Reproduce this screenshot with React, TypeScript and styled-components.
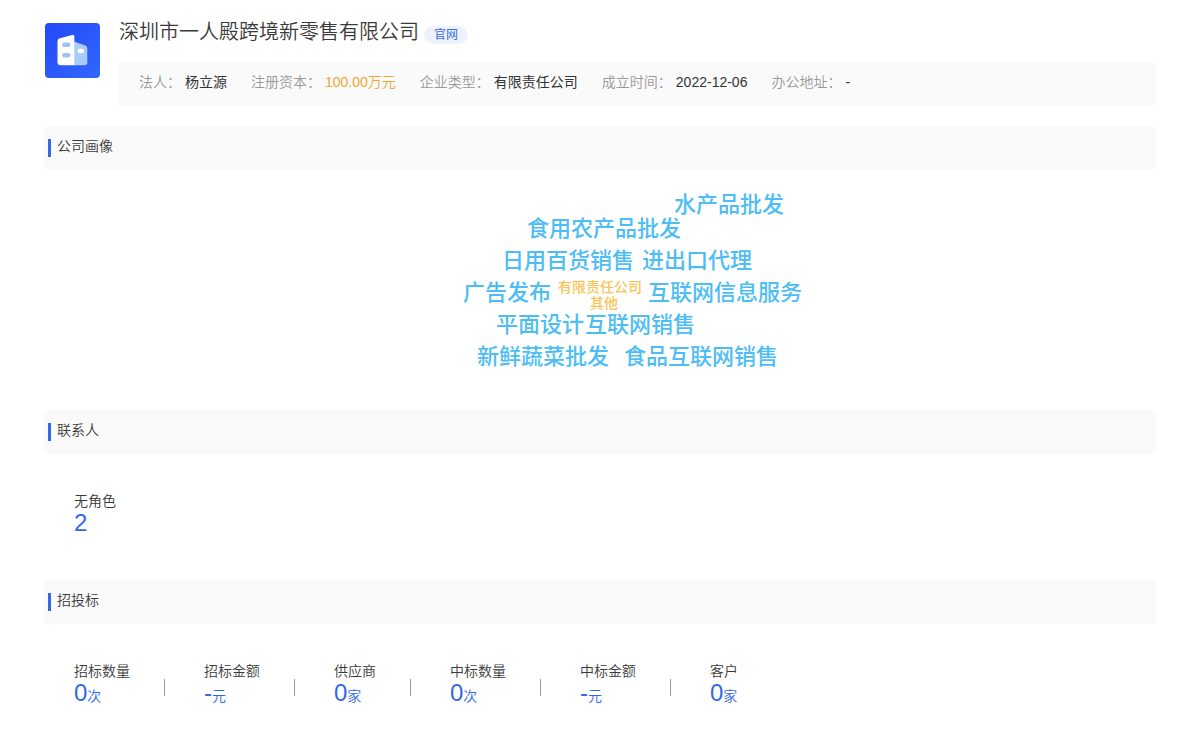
import React from "react";
import styled, { createGlobalStyle } from "styled-components";

const GlobalStyle = createGlobalStyle`
  body {
    margin: 0;
    background: #fff;
    color: #3a3a3a;
    font-family: "Liberation Sans", "Noto Sans CJK SC", sans-serif;
    font-size: 14px;
    font-weight: 350;
    line-height: 20px;
  }
`;

const Page = styled.main`
  padding: 18px 44px 0;
`;

const Header = styled.header`
  display: flex;
  gap: 18px;
  margin-bottom: 20px;
`;

const Logo = styled.svg`
  flex: none;
  width: 57px;
  height: 57px;
  margin-top: 4px;
`;

const Summary = styled.div`
  flex: 1;
  min-width: 0;
`;

const TitleRow = styled.div`
  display: flex;
  align-items: flex-end;
  gap: 5px;
  height: 26px;
  margin-bottom: 18px;
`;

const CompanyName = styled.h1`
  margin: 0;
  font-size: 20px;
  line-height: 24px;
  font-weight: 350;
`;

const SiteLink = styled.a`
  padding: 0 10px;
  border-radius: 9px;
  background: #edf2fd;
  color: #3b6cea;
  font-size: 12px;
  line-height: 18px;
  font-weight: 400;
  text-decoration: none;
`;

const Facts = styled.dl`
  display: flex;
  flex-wrap: wrap;
  gap: 4px 24px;
  margin: 0;
  padding: 10px 20px 14px;
  background: #fafafa;
`;

const Fact = styled.div`
  display: flex;
  gap: 4px;
`;

const FactLabel = styled.dt`
  color: #999;
`;

const FactValue = styled.dd<{ $accent?: boolean }>`
  margin: 0;
  color: ${(p) => (p.$accent ? "#efa62e" : "#333")};
  font-weight: ${(p) => (p.$accent ? 350 : 400)};
`;

const SectionHead = styled.div`
  display: flex;
  align-items: center;
  gap: 6px;
  height: 44px;
  padding-left: 4px;
  background: #fafafa;

  &::before {
    content: "";
    width: 3px;
    height: 18px;
    background: #3467e6;
  }
`;

const SectionTitle = styled.h2`
  margin: 0;
  padding-bottom: 4px;
  font-size: 14px;
  line-height: 20px;
  font-weight: 350;
`;

const CloudArea = styled.div`
  display: flex;
  justify-content: center;
  height: 240px;
`;

const Cloud = styled.svg`
  width: 440px;
  height: 240px;
`;

const Word = styled.text<{ $minor?: boolean }>`
  font-size: ${(p) => (p.$minor ? 14 : 22)}px;
  font-weight: 500;
  fill: ${(p) => (p.$minor ? "#f8c555" : "#4dbdf5")};
`;

const Stats = styled.dl`
  display: flex;
  flex-wrap: wrap;
  margin: 0;
  padding: 37px 30px;
`;

const Stat = styled.div`
  display: flex;
  flex-direction: column;
  height: 52px;
`;

const Divider = styled.div`
  width: 1px;
  height: 17px;
  margin: 18px 39px 0 34px;
  background: #999;
`;

const StatLabel = styled.dt`
  line-height: 20px;
`;

const StatValue = styled.dd`
  margin: 0;
  color: #3467e6;
  font-size: 24px;
  line-height: 24px;
`;

const Unit = styled.span`
  font-size: 14px;
`;

const facts = [
  { label: "法人", value: "杨立源" },
  { label: "注册资本", value: "100.00万元", accent: true },
  { label: "企业类型", value: "有限责任公司" },
  { label: "成立时间", value: "2022-12-06" },
  { label: "办公地址", value: "-" },
];

const words = [
  { text: "水产品批发", x: 294, y: 42 },
  { text: "食用农产品批发", x: 147, y: 66 },
  { text: "日用百货销售", x: 122, y: 98 },
  { text: "进出口代理", x: 262, y: 98 },
  { text: "广告发布", x: 83, y: 130 },
  { text: "有限责任公司", x: 178, y: 122, minor: true },
  { text: "其他", x: 210, y: 138, minor: true },
  { text: "互联网信息服务", x: 268, y: 130 },
  { text: "平面设计", x: 116, y: 162 },
  { text: "互联网销售", x: 205, y: 162 },
  { text: "新鲜蔬菜批发", x: 97, y: 194 },
  { text: "食品互联网销售", x: 244, y: 194 },
];

type StatItem = { label: string; value: string; unit?: string };

const contacts: StatItem[] = [{ label: "无角色", value: "2" }];

const bids: StatItem[] = [
  { label: "招标数量", value: "0", unit: "次" },
  { label: "招标金额", value: "-", unit: "元" },
  { label: "供应商", value: "0", unit: "家" },
  { label: "中标数量", value: "0", unit: "次" },
  { label: "中标金额", value: "-", unit: "元" },
  { label: "客户", value: "0", unit: "家" },
];

function StatList({ items }: { items: StatItem[] }) {
  return (
    <Stats>
      {items.map((item, i) => (
        <React.Fragment key={item.label}>
          {i > 0 && <Divider />}
          <Stat>
            <StatLabel>{item.label}</StatLabel>
            <StatValue>
              {item.value}
              {item.unit && <Unit>{item.unit}</Unit>}
            </StatValue>
          </Stat>
        </React.Fragment>
      ))}
    </Stats>
  );
}

function CompanyLogo() {
  return (
    <Logo viewBox="0 0 57 57" aria-hidden="true">
      <defs>
        <linearGradient id="logo-bg" x1="0" y1="0" x2="1" y2="1">
          <stop offset="0" stopColor="#2448f8" />
          <stop offset="1" stopColor="#3268fb" />
        </linearGradient>
      </defs>
      <rect x="1" y="1" width="55" height="55" rx="4" fill="url(#logo-bg)" />
      <path d="M30 19.5 41.500 23.500Q43.300 24.200 43.300 26V40.500Q43.300 43.200 40.500 43.200H30Z" fill="#a9cbfa" />
      <path d="M15.800 16.200 28.500 13.100Q30.300 12.700 30.300 14.500V43.200H16.500Q13.500 43.200 13.500 40.200V19Q13.500 16.800 15.800 16.200Z" fill="#fff" />
      <rect x="18" y="20.500" width="8.500" height="4.600" rx="2.300" fill="#9fc2f5" />
      <rect x="18" y="31" width="8.500" height="4.600" rx="2.300" fill="#9fc2f5" />
      <rect x="33.500" y="26.700" width="6.500" height="4.600" rx="2.300" fill="#fff" />
    </Logo>
  );
}

export default function App() {
  return (
    <>
      <GlobalStyle />
      <Page lang="zh-CN">
        <Header>
          <CompanyLogo />
          <Summary>
            <TitleRow>
              <CompanyName>深圳市一人殿跨境新零售有限公司</CompanyName>
              <SiteLink href="#">官网</SiteLink>
            </TitleRow>
            <Facts>
              {facts.map((f) => (
                <Fact key={f.label}>
                  <FactLabel>{`${f.label}\uff1a`}</FactLabel>
                  <FactValue $accent={f.accent}>{f.value}</FactValue>
                </Fact>
              ))}
            </Facts>
          </Summary>
        </Header>

        <section>
          <SectionHead>
            <SectionTitle>公司画像</SectionTitle>
          </SectionHead>
          <CloudArea>
            <Cloud viewBox="0 0 440 240" role="img" aria-label="公司画像">
              {words.map((w) => (
                <Word key={w.text} x={w.x} y={w.y} $minor={w.minor}>
                  {w.text}
                </Word>
              ))}
            </Cloud>
          </CloudArea>
        </section>

        <section>
          <SectionHead>
            <SectionTitle>联系人</SectionTitle>
          </SectionHead>
          <StatList items={contacts} />
        </section>

        <section>
          <SectionHead>
            <SectionTitle>招投标</SectionTitle>
          </SectionHead>
          <StatList items={bids} />
        </section>
      </Page>
    </>
  );
}
